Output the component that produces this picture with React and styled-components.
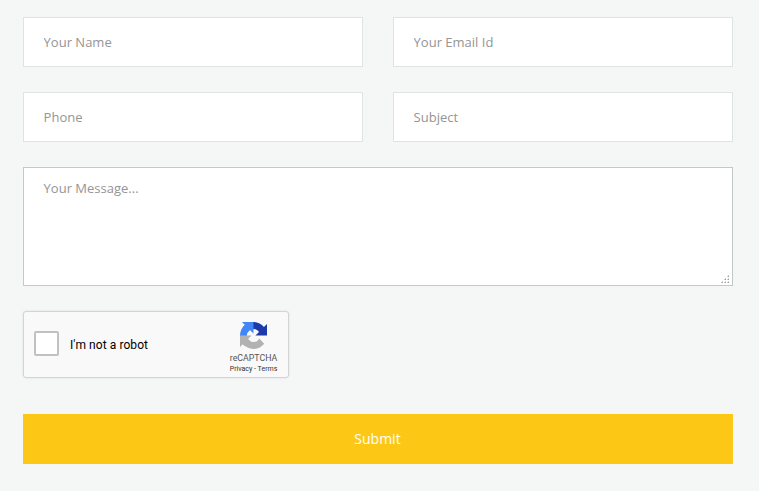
import React from "react";
import styled, { createGlobalStyle, css } from "styled-components";

const GlobalStyle = createGlobalStyle`
  *, *::before, *::after { box-sizing: border-box; }
  body {
    margin: 0;
    background: #f5f7f7;
    font-family: "Open Sans", sans-serif;
  }
`;

const ContactForm = styled.form`
  display: grid;
  grid-template-columns: 340px 340px;
  gap: 25px 30px;
  width: 710px;
  margin: 17px 0 0 23px;
`;

const fieldStyle = css`
  display: block;
  width: 100%;
  margin: 0;
  border-radius: 0;
  outline: none;
  background: #fff;
  color: #555;
  font: 13px/20px "Open Sans", sans-serif;
  &::placeholder {
    color: #959595;
    opacity: 1;
  }
`;

const TextField = styled.input`
  ${fieldStyle}
  height: 50px;
  padding: 0 19.6px;
  border: 1px solid #dfe3e6;
`;

const MessageBox = styled.div`
  position: relative;
  grid-column: 1 / -1;
  height: 119px;
`;

const MessageField = styled.textarea`
  ${fieldStyle}
  height: 100%;
  padding: 10px 19.6px;
  border: 1px solid #c5c8c8;
  resize: none;
`;

const ResizeGrip = styled.svg`
  position: absolute;
  right: 3px;
  bottom: 2px;
  width: 9px;
  height: 9px;
  pointer-events: none;
`;

const Captcha = styled.div`
  display: flex;
  grid-column: 1 / -1;
  align-items: center;
  width: 266px;
  height: 67px;
  margin-bottom: 11px;
  padding-left: 10px;
  border: 1px solid #d3d3d3;
  border-radius: 3px;
  background: #f9f9f9;
  box-shadow: 0 0 3px rgba(0, 0, 0, 0.08);
`;

const CheckBox = styled.button`
  width: 25px;
  height: 25px;
  margin: 0 11px 2px 0;
  padding: 0;
  border: 2px solid #c1c1c1;
  border-radius: 2px;
  background: #fff;
`;

const CaptchaLabel = styled.span`
  flex: 1;
  padding-top: 1px;
  color: #000;
  font: 12px/16px Roboto, sans-serif;
  letter-spacing: 0.08px;
`;

const CaptchaBrand = styled.div`
  display: flex;
  flex-direction: column;
  align-items: center;
  width: 70px;
  height: 100%;
  padding-top: 10px;
  color: #555;
  font-family: Roboto, sans-serif;
`;

const BrandName = styled.span`
  margin: 3px 0 0 1px;
  font-size: 8.8px;
  line-height: 12px;
`;

const LegalLinks = styled.span`
  margin-left: 1px;
  font-size: 7px;
  line-height: 10px;
  color: #333;
  white-space: nowrap;
`;

const SubmitButton = styled.button`
  grid-column: 1 / -1;
  height: 50px;
  padding: 0 1px 0 0;
  border: 0;
  background: #fdc716;
  color: #fff;
  font: 14px/20px "Open Sans", sans-serif;
`;

const dots = [[6, 0], [3, 3], [6, 3], [0, 6], [3, 6], [6, 6]];

function Grip() {
  return (
    <ResizeGrip viewBox="0 0 9 9" shapeRendering="crispEdges">
      {dots.map(([x, y]) => (
        <g key={`${x}-${y}`}>
          <rect x={x} y={y + 1} width="1" height="1" fill="#d0d0d0" />
          <rect x={x + 1} y={y} width="1" height="1" fill="#d0d0d0" />
          <rect x={x + 1} y={y + 1} width="1" height="1" fill="#a0a0a0" />
        </g>
      ))}
    </ResizeGrip>
  );
}

function CaptchaLogo() {
  return (
    <svg width="27" height="27" viewBox="0 0 64 64">
      <path fill="#1c3aa9" d="M64 31.955l-.033-1.37V4.687l-7.16 7.16C50.948 4.674 42.033.093 32.05.093c-10.4 0-19.622 4.96-25.458 12.64l11.736 11.86a15.55 15.55 0 0 1 4.754-5.334c2.05-1.6 4.952-2.906 8.968-2.906.485 0 .86.057 1.135.163 4.976.393 9.288 3.14 11.828 7.124l-8.307 8.307L64 31.953" />
      <path fill="#4285f4" d="M31.862.094l-1.37.033H4.594l7.16 7.16C4.58 13.147 0 22.06 0 32.046c0 10.4 4.96 19.622 12.64 25.458L24.5 45.768a15.55 15.55 0 0 1-5.334-4.754c-1.6-2.05-2.906-4.952-2.906-8.968 0-.485.057-.86.163-1.135.393-4.976 3.14-9.288 7.124-11.828l8.307 8.307L31.86.095" />
      <path fill="#b2b2b2" d="M.001 32.045l.033 1.37v25.898l7.16-7.16c5.86 7.173 14.774 11.754 24.76 11.754 10.4 0 19.622-4.96 25.458-12.64l-11.736-11.86a15.55 15.55 0 0 1-4.754 5.334c-2.05 1.6-4.952 2.906-8.968 2.906-.485 0-.86-.057-1.135-.163-4.976-.393-9.288-3.14-11.828-7.124l8.307-8.307c-10.522.04-22.4.066-27.295-.005" />
    </svg>
  );
}

export default function App() {
  return (
    <>
      <GlobalStyle />
      <ContactForm onSubmit={(e) => e.preventDefault()}>
        <TextField placeholder="Your Name" />
        <TextField type="email" placeholder="Your Email Id" />
        <TextField type="tel" placeholder="Phone" />
        <TextField placeholder="Subject" />
        <MessageBox>
          <MessageField placeholder="Your Message..." />
          <Grip />
        </MessageBox>
        <Captcha>
          <CheckBox type="button" role="checkbox" aria-checked="false" aria-label="I'm not a robot" />
          <CaptchaLabel>I'm not a robot</CaptchaLabel>
          <CaptchaBrand>
            <CaptchaLogo />
            <BrandName>reCAPTCHA</BrandName>
            <LegalLinks>Privacy - Terms</LegalLinks>
          </CaptchaBrand>
        </Captcha>
        <SubmitButton type="submit">Submit</SubmitButton>
      </ContactForm>
    </>
  );
}
